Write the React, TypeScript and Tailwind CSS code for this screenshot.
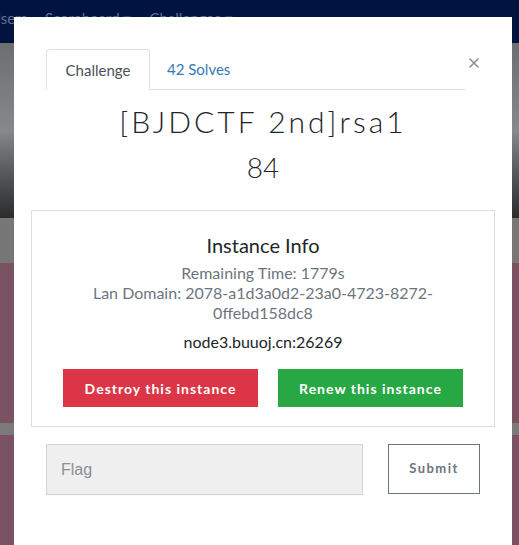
import { X } from "lucide-react";

function Backdrop() {
  return (
    <div className="w-full h-full flex flex-col font-['Lato',sans-serif]">
      <div className="h-[43px] bg-[#00143f] flex items-start gap-[18px] -ml-[10px] pt-[7px] text-[15px] text-[#5f6f96]">
        <span>Users</span>
        <span>Scoreboard ▾</span>
        <span>Challenges ▾</span>
      </div>
      <div className="h-[175px] bg-gradient-to-b from-[#6b6f72] via-[#85898c] to-[#2a2c2e]" />
      <div className="h-[45px] bg-[#777777]" />
      <div className="h-[160px] bg-[#7a5262]" />
      <div className="h-[12px] bg-[#7a7a7a]" />
      <div className="flex-1 bg-[#7a5262]" />
    </div>
  );
}

function InstanceInfo() {
  return (
    <div className="mx-[17px] mt-[25px] border border-[#dedede] px-[40px] pt-[20px] pb-[19px] flex flex-col items-center text-center">
      <h4 className="text-[20px] leading-[28px] text-[#212529]">Instance Info</h4>
      <p className="mt-[4px] text-[16px] leading-[20px] text-[#6c757d]">
        Remaining Time: 1779s
      </p>
      <p className="text-[16px] leading-[20px] text-[#6c757d]">
        Lan Domain: 2078-a1d3a0d2-23a0-4723-8272-0ffebd158dc8
      </p>
      <p className="mt-[9px] text-[16px] leading-[20px] text-[#212529]">
        node3.buuoj.cn:26269
      </p>
      <div className="mt-[17px] flex gap-[20px]">
        <button className="w-[195px] h-[38px] bg-[#dc3545] text-white text-[14px] font-bold tracking-[1px]">
          Destroy this instance
        </button>
        <button className="w-[185px] h-[38px] bg-[#28a745] text-white text-[14px] font-bold tracking-[1px]">
          Renew this instance
        </button>
      </div>
    </div>
  );
}

export default function App() {
  return (
    <div className="relative w-[519px] h-[545px] overflow-hidden">
      <Backdrop />
      <div className="absolute left-[14px] top-[17px] w-[498px] h-[528px] bg-white font-['Lato',sans-serif]">
        <button className="absolute left-[452px] top-[38px] text-[#8a8a8a]">
          <X size={16} strokeWidth={2.2} />
        </button>
        <div className="ml-[32px] mt-[32px] w-[420px] h-[41px] border-b border-[#dee2e6] flex">
          <div className="w-[104px] h-[41px] border border-b-0 border-[#dee2e6] rounded-t-[4px] bg-white flex items-center justify-center text-[15px] text-[#495057] -mb-px">
            Challenge
          </div>
          <div className="ml-[17px] h-[41px] flex items-center text-[15px] text-[#337ab7]">
            42 Solves
          </div>
        </div>
        <h2 className="mt-[13px] text-center text-[30px] leading-[36px] font-light tracking-[3px] text-[#212529]">
          [BJDCTF 2nd]rsa1
        </h2>
        <h3 className="mt-[10px] text-center text-[28px] leading-[36px] font-light text-[#212529]">
          84
        </h3>
        <InstanceInfo />
        <div className="mx-[32px] mt-[17px] flex gap-[25px]">
          <input
            placeholder="Flag"
            className="w-[317px] h-[51px] bg-[#efefef] border border-[#ced4da] px-[14px] text-[16px] font-['Liberation_Sans',sans-serif] placeholder:text-[#8c9095] outline-none"
          />
          <button className="w-[92px] h-[50px] border border-[#6c757d] text-[13px] font-bold tracking-[1.5px] text-[#6c757d]">
            Submit
          </button>
        </div>
      </div>
    </div>
  );
}
